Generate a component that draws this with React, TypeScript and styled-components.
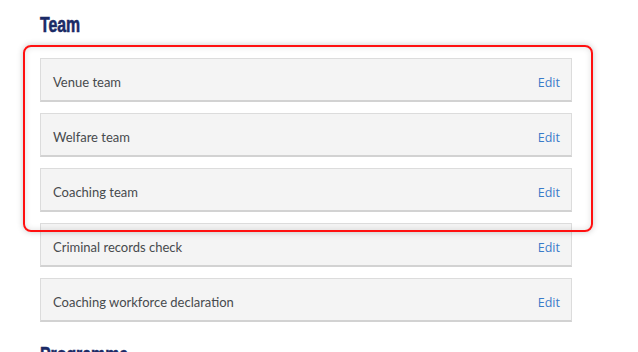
import React from "react";
import styled, { createGlobalStyle } from "styled-components";

const Global = createGlobalStyle`
  html, body { margin: 0; padding: 0; background: #fff; }
  body { font-family: Lato, "Open Sans", sans-serif; }
`;

const Page = styled.div`
  padding: 14px 0 0 40px;
  width: 532px;
`;

const Heading = styled.h2`
  margin: 0;
  height: 22px;
  font-family: "Liberation Sans", Arial, sans-serif;
  font-weight: 700;
  font-size: 22px;
  line-height: 22px;
  color: #1b2a66;
  white-space: nowrap;
`;

const HeadingText = styled.span`
  display: inline-block;
  transform: scaleX(0.72);
  transform-origin: left center;
  -webkit-text-stroke: 0.6px #1b2a66;
`;

const List = styled.div`
  position: relative;
  display: flex;
  flex-direction: column;
  gap: 11px;
  margin-top: 22px;
  margin-bottom: 22px;
`;

const Row = styled.div`
  box-sizing: border-box;
  height: 44px;
  display: flex;
  align-items: center;
  justify-content: space-between;
  padding: 5px 11px 0 12px;
  background: #f4f4f4;
  border: 1px solid #dcdcdc;
  border-bottom: 2px solid #d2d2d2;
  font-size: 13px;
  color: #474a4d;
`;

const Label = styled.span`
  font-family: Lato, sans-serif;
`;

const EditLink = styled.a`
  font-family: "Open Sans", Lato, sans-serif;
  font-size: 12.5px;
  color: #3a7bc9;
  text-decoration: none;
`;

const Highlight = styled.div`
  position: absolute;
  left: -17px;
  top: -13px;
  width: 570px;
  height: 187px;
  box-sizing: border-box;
  border: 2px solid #ff1010;
  border-radius: 8px;
  box-shadow: 0 0 6px rgba(0, 0, 0, 0.22), inset 0 0 6px rgba(0, 0, 0, 0.12);
  pointer-events: none;
`;

const items = [
  "Venue team",
  "Welfare team",
  "Coaching team",
  "Criminal records check",
  "Coaching workforce declaration",
];

export default function App() {
  return (
    <>
      <Global />
      <Page>
        <Heading>
          <HeadingText>Team</HeadingText>
        </Heading>
        <List>
          {items.map((t) => (
            <Row key={t}>
              <Label>{t}</Label>
              <EditLink href="#">Edit</EditLink>
            </Row>
          ))}
          <Highlight />
        </List>
        <Heading>
          <HeadingText>Programme</HeadingText>
        </Heading>
      </Page>
    </>
  );
}
